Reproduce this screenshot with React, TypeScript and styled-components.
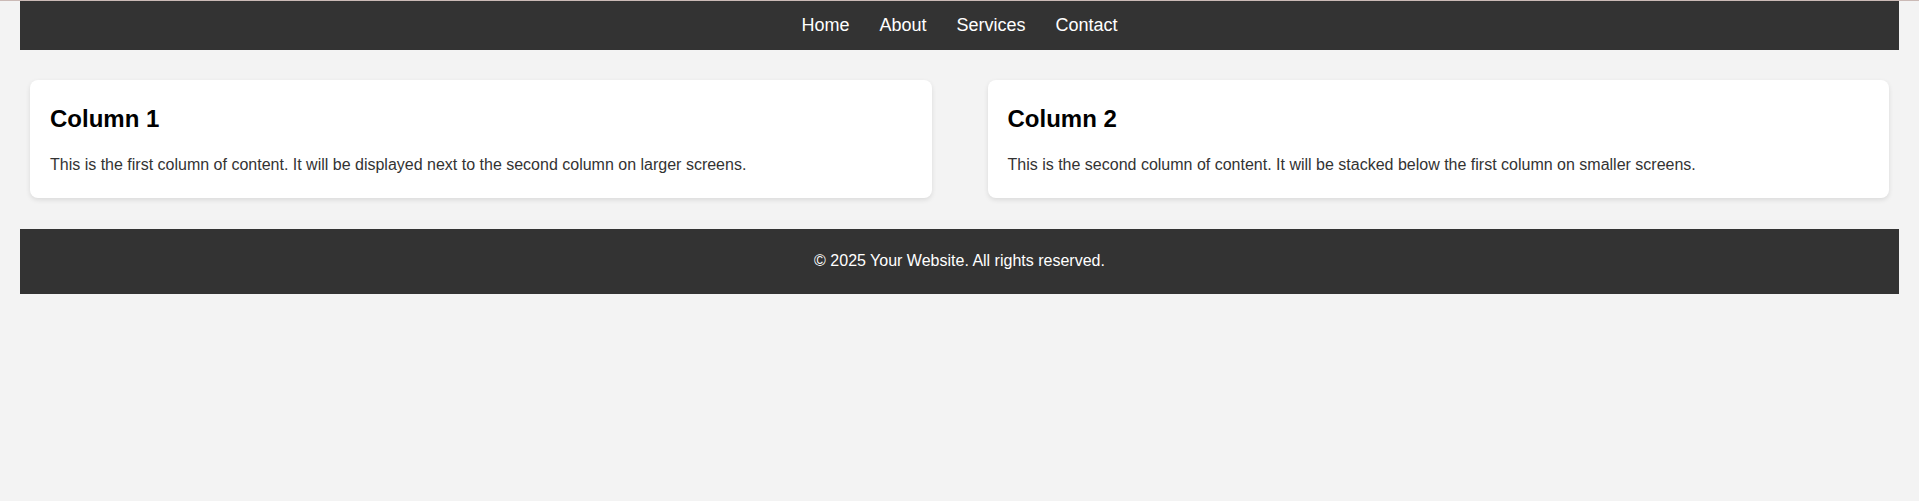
import React from 'react';
import styled, { createGlobalStyle } from 'styled-components';

const GlobalStyle = createGlobalStyle`
    html, body {
        margin: 0;
        padding: 0;
    }
    body {
        padding: 0 20px;
        background: #f3f3f3;
        border-top: 1px solid #cbbab6;
        font-family: "Liberation Sans", Arial, sans-serif;
        color: #333;
    }
`;

const links = ['Home', 'About', 'Services', 'Contact'];

const columns = [
    {
        title: 'Column 1',
        text: 'This is the first column of content. It will be displayed next to the second column on larger screens.',
    },
    {
        title: 'Column 2',
        text: 'This is the second column of content. It will be stacked below the first column on smaller screens.',
    },
];

export default function App() {
    return (
        <>
            <GlobalStyle />
            <NavBar>
                {links.map((link) => (
                    <NavLink key={link} href='#'>{link}</NavLink>
                ))}
            </NavBar>
            <Main>
                {columns.map((col) => (
                    <Card key={col.title}>
                        <CardTitle>{col.title}</CardTitle>
                        <CardText>{col.text}</CardText>
                    </Card>
                ))}
            </Main>
            <Footer>&copy; 2025 Your Website. All rights reserved.</Footer>
        </>
    );
}

const NavBar = styled.nav`
    background: #333;
    display: flex;
    justify-content: center;
    padding: 13.5px 0 14.5px;
`;

const NavLink = styled.a`
    color: #fff;
    text-decoration: none;
    font-size: 18px;
    line-height: 21px;
    margin: 0 15px;
`;

const Main = styled.main`
    display: flex;
    gap: 56px;
    padding: 30px 10px 31px;
`;

const Card = styled.section`
    flex: 1;
    background: #fff;
    border-radius: 8px;
    box-shadow: 0 2px 5px rgba(0, 0, 0, 0.1);
    padding: 25px 20px 24px;
`;

const CardTitle = styled.h2`
    margin: 0 0 22px;
    font-size: 24px;
    line-height: 28px;
    color: #000;
`;

const CardText = styled.p`
    margin: 0;
    font-size: 16px;
    line-height: 19px;
    color: #333;
`;

const Footer = styled.footer`
    background: #333;
    color: #fff;
    text-align: center;
    font-size: 16px;
    line-height: 19px;
    padding: 22px 0 24px;
`;
